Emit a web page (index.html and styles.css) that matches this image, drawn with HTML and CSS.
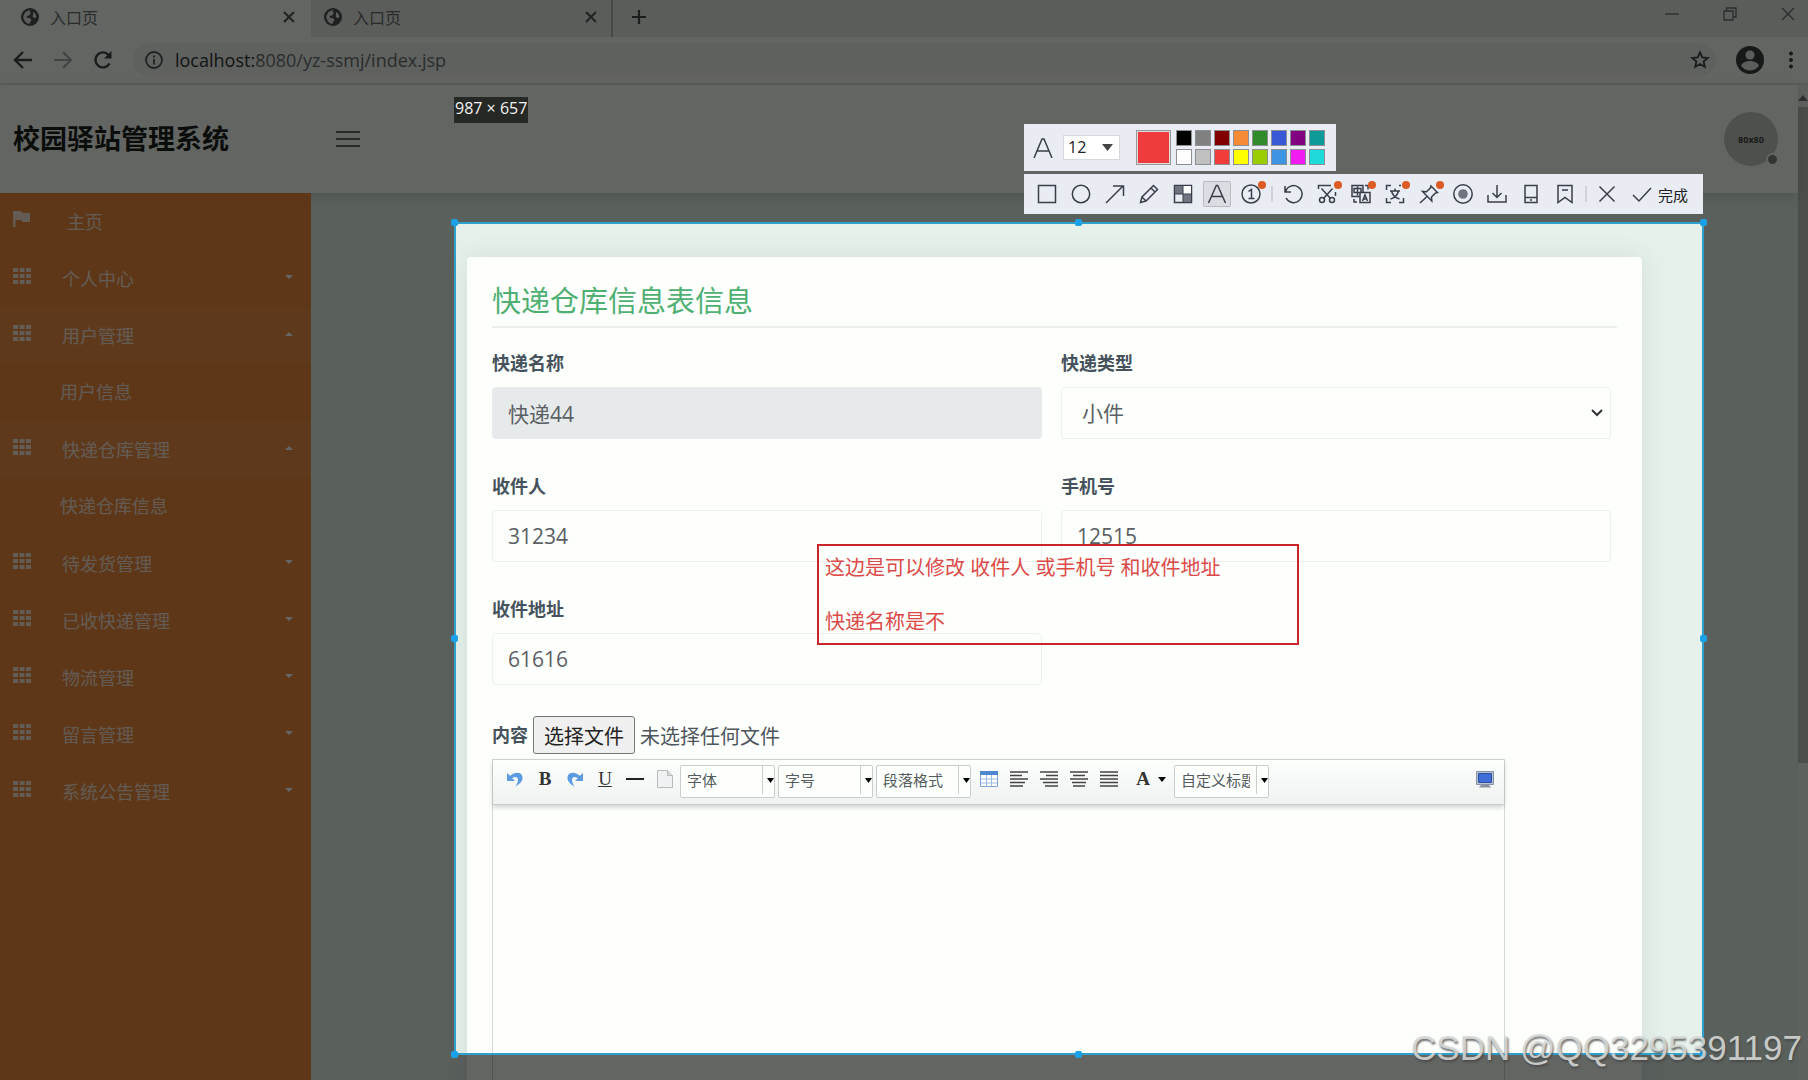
FILE: index.html
```html
<!DOCTYPE html>
<html lang="zh-CN">
<head>
<meta charset="utf-8">
<title>入口页</title>
<link rel="stylesheet" href="styles.css">
</head>
<body>
<svg class="defs" aria-hidden="true">
  <symbol id="globe" viewBox="0 0 18 18"><circle cx="9" cy="9" r="9" fill="#4b4e50"/><path d="M3 6.500c1.500-3 4-4.300 6.500-4.200l-1 1.800 1.500 1-2 2.400-2.500.6 1 2H9l1.500 2-1.500 2.500-.5 1.500C5 15.500 2.200 12 2.300 8.500zM12 4l2.500 1.800 1 3.500-2 1-1.800-1.500.3-2.300z" fill="#e4e6e4"/></symbol>
  <symbol id="grid" viewBox="0 0 18 16"><path d="M0 0h5v4H0zm6.500 0h5v4h-5zM13 0h5v4h-5zM0 6h5v4H0zm6.500 0h5v4h-5zM13 6h5v4h-5zM0 12h5v4H0zm6.500 0h5v4h-5zM13 12h5v4h-5z" fill="currentColor"/></symbol>
  <symbol id="cross" viewBox="0 0 12 12"><path d="M1 1l10 10M11 1L1 11" stroke="currentColor" stroke-width="2" fill="none"/></symbol>
</svg>

<header class="browser">
  <div class="tabs">
    <div class="tab tab-active"><svg class="globe"><use href="#globe"/></svg><span>入口页</span><button class="tab-close" aria-label="关闭"><svg><use href="#cross"/></svg></button></div>
    <div class="tab"><svg class="globe"><use href="#globe"/></svg><span>入口页</span><button class="tab-close" aria-label="关闭"><svg><use href="#cross"/></svg></button></div>
    <button class="new-tab" aria-label="新标签页"><svg width="16" height="16" viewBox="0 0 16 16"><path d="M8 1v14M1 8h14" stroke="#404244" stroke-width="2.200"/></svg></button>
    <div class="window-controls">
      <button aria-label="最小化"><svg width="14" height="14" viewBox="0 0 14 14"><path d="M0 7h14" stroke="#6a6d6f" stroke-width="1.300"/></svg></button>
      <button aria-label="还原"><svg width="14" height="14" viewBox="0 0 14 14" fill="none" stroke="#6a6d6f" stroke-width="1.300"><path d="M1 4h9v9H1zM3.500 4V1H13v9h-3"/></svg></button>
      <button aria-label="关闭窗口"><svg width="14" height="14" viewBox="0 0 14 14"><path d="M1 1l12 12M13 1L1 13" stroke="#6a6d6f" stroke-width="1.300"/></svg></button>
    </div>
  </div>
  <div class="toolbar">
    <button aria-label="后退"><svg width="20" height="20" viewBox="0 0 20 20" fill="none" stroke="#404345" stroke-width="2.400"><path d="M19 10H2.500M10 2l-8 8 8 8"/></svg></button>
    <button aria-label="前进"><svg width="20" height="20" viewBox="0 0 20 20" fill="none" stroke="#a8aaab" stroke-width="2.200"><path d="M1 10h16.500M10 2l8 8-8 8"/></svg></button>
    <button aria-label="刷新"><svg width="20" height="20" viewBox="0 0 20 20" fill="none" stroke="#404345" stroke-width="2.400"><path d="M16.500 13.500A7.500 7.500 0 1 1 15.600 5"/><path d="M18.500 1v7.500H11z" fill="#404345" stroke="none"/></svg></button>
    <div class="omnibox">
      <svg width="18" height="18" viewBox="0 0 18 18" fill="none" stroke="#505355" stroke-width="1.800"><circle cx="9" cy="9" r="8"/><path d="M9 8v5.500M9 4.500v2"/></svg>
      <span class="url"><b>localhost:</b>8080/yz-ssmj/index.jsp</span>
      <button class="star" aria-label="收藏"><svg width="20" height="20" viewBox="0 0 20 20" fill="none" stroke="#404345" stroke-width="1.800"><path d="M10 2.500l2.300 5 5.500.5-4.200 3.600 1.300 5.400-4.900-2.900L5.100 17l1.300-5.400L2.200 8l5.500-.5z"/></svg></button>
    </div>
    <button aria-label="用户"><svg width="28" height="28" viewBox="0 0 28 28"><circle cx="14" cy="14" r="14" fill="#383b3d"/><circle cx="14" cy="9" r="4.500" fill="#e8eae8"/><path d="M5 19.500c2-3.500 6-4.500 9-4.500s7 1 9 4.500c-2 3.500-5.500 5-9 5s-7-1.500-9-5z" fill="#e8eae8"/></svg></button>
    <button class="more" aria-label="菜单"><svg width="6" height="18" viewBox="0 0 6 18" fill="#383b3d"><circle cx="3" cy="2.500" r="2"/><circle cx="3" cy="9" r="2"/><circle cx="3" cy="15.500" r="2"/></svg></button>
  </div>
</header>

<div class="viewport">
  <div class="app">
    <header class="app-header">
      <h1>校园驿站管理系统</h1>
      <button class="burger" aria-label="切换菜单"><i></i><i></i><i></i></button>
      <div class="avatar"><span>80x80</span></div>
    </header>
    <div class="app-body">
      <nav class="sidebar">
        <a class="home" href="#"><svg class="nav-icon" viewBox="0 0 18 16"><path d="M0 0h8l1 2h8v9H9.500L8.500 9H2.500v7H0z" fill="currentColor"/></svg><span>主页</span></a>
        <a href="#"><svg class="nav-icon"><use href="#grid"/></svg><span>个人中心</span><i class="caret"></i></a>
        <a class="open" href="#"><svg class="nav-icon"><use href="#grid"/></svg><span>用户管理</span><i class="caret up"></i></a>
        <a class="sub" href="#">用户信息</a>
        <a class="open" href="#"><svg class="nav-icon"><use href="#grid"/></svg><span>快递仓库管理</span><i class="caret up"></i></a>
        <a class="sub" href="#">快递仓库信息</a>
        <a href="#"><svg class="nav-icon"><use href="#grid"/></svg><span>待发货管理</span><i class="caret"></i></a>
        <a href="#"><svg class="nav-icon"><use href="#grid"/></svg><span>已收快递管理</span><i class="caret"></i></a>
        <a href="#"><svg class="nav-icon"><use href="#grid"/></svg><span>物流管理</span><i class="caret"></i></a>
        <a href="#"><svg class="nav-icon"><use href="#grid"/></svg><span>留言管理</span><i class="caret"></i></a>
        <a href="#"><svg class="nav-icon"><use href="#grid"/></svg><span>系统公告管理</span><i class="caret"></i></a>
      </nav>
      <main class="content">
        <section class="card">
          <h2>快递仓库信息表信息</h2>
          <form class="form">
            <div class="field"><label for="name">快递名称</label><input id="name" value="快递44" readonly></div>
            <div class="field"><label for="type">快递类型</label><select id="type"><option>小件</option></select></div>
            <div class="field"><label for="receiver">收件人</label><input id="receiver" value="31234"></div>
            <div class="field"><label for="phone">手机号</label><input id="phone" value="12515"></div>
            <div class="field"><label for="address">收件地址</label><input id="address" value="61616"></div>
          </form>
          <div class="file-row"><label for="file">内容</label><button id="file" type="button">选择文件</button><span>未选择任何文件</span></div>
          <div class="editor">
            <div class="editor-bar">
              <button aria-label="撤销"><svg width="16" height="16" viewBox="0 0 16 16"><path d="M0 2v8h8L5.200 7.300C8 5 11 6 11 9c0 2-1 4-2.500 6.500C13 13 16 10 15.500 6 15 1 8 0 3.200 4.800z" fill="#5b9be0"/></svg></button>
              <button class="serif" aria-label="加粗">B</button>
              <button aria-label="重做"><svg width="16" height="16" viewBox="0 0 16 16"><path d="M16 2v8H8l2.800-2.700C8 5 5 6 5 9c0 2 1 4 2.500 6.500C3 13 0 10 .5 6 1 1 8 0 12.800 4.800z" fill="#5b9be0"/></svg></button>
              <button class="serif underline" aria-label="下划线">U</button>
              <button aria-label="分隔线"><svg width="18" height="16" viewBox="0 0 18 16"><path d="M0 8h18" stroke="#222" stroke-width="2"/></svg></button>
              <button aria-label="新建"><svg width="16" height="18" viewBox="0 0 16 18"><path d="M.5.500h10l5 5v12H.5z" fill="#f0f1f3" stroke="#b8babd"/><path d="M10.500.500v5h5" fill="#d8dadc" stroke="#b8babd"/></svg></button>
              <select aria-label="字体"><option>字体</option></select>
              <select aria-label="字号"><option>字号</option></select>
              <select aria-label="段落格式"><option>段落格式</option></select>
              <button aria-label="表格"><svg width="18" height="16" viewBox="0 0 18 16"><path d="M.5.500h17v15H.5z" fill="#fff" stroke="#7fa3d4"/><path d="M0 0h18v4H0z" fill="#4f86d0"/><path d="M1 8h16M1 12h16M6.500 4v11M11.500 4v11" stroke="#9bb9e2"/></svg></button>
              <button aria-label="左对齐"><svg width="18" height="16" viewBox="0 0 18 16"><path d="M0 1h18M0 4.500h12M0 8h18M0 11.500h15M0 15h13" stroke="#444" stroke-width="1.600"/></svg></button>
              <button aria-label="右对齐"><svg width="18" height="16" viewBox="0 0 18 16"><path d="M0 1h18M6 4.500h12M0 8h18M3 11.500h15M5 15h13" stroke="#444" stroke-width="1.600"/></svg></button>
              <button aria-label="居中"><svg width="18" height="16" viewBox="0 0 18 16"><path d="M0 1h18M3 4.500h12M0 8h18M2 11.500h14M3 15h12" stroke="#444" stroke-width="1.600"/></svg></button>
              <button aria-label="两端对齐"><svg width="18" height="16" viewBox="0 0 18 16"><path d="M0 1h18M0 4.500h18M0 8h18M0 11.500h18M0 15h18" stroke="#444" stroke-width="1.600"/></svg></button>
              <button class="serif color" aria-label="文字颜色">A<svg width="8" height="5" viewBox="0 0 8 5"><path d="M0 0h8L4 5z"/></svg></button>
              <select aria-label="自定义标题"><option>自定义标题</option></select>
              <button class="screen" aria-label="全屏"><svg width="18" height="17" viewBox="0 0 18 17"><path d="M.5.500h17v13H.5z" fill="#b9c3d2" stroke="#8592a8"/><path d="M2.500 2.500h13v9h-13z" fill="#3f6ed8" stroke="#2d4f9f"/><path d="M5 14h8l2 2.500H3z" fill="#8c929c"/></svg></button>
            </div>
            <textarea aria-label="正文"></textarea>
          </div>
        </section>
      </main>
    </div>
  </div>
  <div class="scrollbar"><i></i><b></b></div>
</div>

<div class="capture">
  <i class="handle nw"></i><i class="handle n"></i><i class="handle ne"></i><i class="handle w"></i><i class="handle e"></i><i class="handle sw"></i><i class="handle s"></i><i class="handle se"></i>
  <span class="size-tag">987 × 657</span>
  <textarea class="note" aria-label="批注" spellcheck="false">这边是可以修改 收件人 或手机号 和收件地址

快递名称是不</textarea>
  <div class="capture-tools">
    <div class="font-panel">
      <svg class="letter" width="20" height="20" viewBox="0 0 20 20"><path d="M1 20L9 1h2l8 19M4 13h12"/></svg>
      <select aria-label="字号"><option>12</option></select>
      <button class="swatch-current" aria-label="当前颜色"></button>
      <div class="swatches">
        <button class="black" aria-label="黑"></button><button class="gray" aria-label="灰"></button><button class="maroon" aria-label="深红"></button><button class="orange" aria-label="橙"></button><button class="green" aria-label="绿"></button><button class="blue" aria-label="蓝"></button><button class="purple" aria-label="紫"></button><button class="teal" aria-label="青"></button>
        <button class="white" aria-label="白"></button><button class="silver" aria-label="银"></button><button class="red" aria-label="红"></button><button class="yellow" aria-label="黄"></button><button class="lime" aria-label="黄绿"></button><button class="sky" aria-label="天蓝"></button><button class="magenta" aria-label="品红"></button><button class="cyan" aria-label="浅青"></button>
      </div>
    </div>
    <div class="draw-bar">
      <button aria-label="矩形"><svg viewBox="0 0 20 20"><path d="M1.500 1.500h17v17h-17z"/></svg></button>
      <button aria-label="椭圆"><svg viewBox="0 0 20 20"><circle cx="10" cy="10" r="8.700"/></svg></button>
      <button aria-label="箭头"><svg viewBox="0 0 20 20"><path d="M1 19L18 2M8 2h10.500v10"/></svg></button>
      <button aria-label="画笔"><svg viewBox="0 0 20 20"><path d="M1.500 18.500l1.500-5.500L14.500 1.500l4 4L7 17zM12 4l4 4M3 13l4 4"/></svg></button>
      <button aria-label="马赛克"><svg viewBox="0 0 20 20"><path d="M1.500 1.500h17v17h-17z"/><path d="M2 2h8v8H2zM10 10h8v8h-8z" fill="#707481" stroke="none"/><path d="M10 2h8v8h-8z" fill="#fff" stroke="none"/><path d="M2 10h16M10 2v16" stroke-width="1"/></svg></button>
      <button class="selected" aria-label="文字"><svg viewBox="0 0 20 20"><path d="M1.500 19L9.300 1.500h1.400L18.500 19M4.500 12.500h11"/></svg></button>
      <button class="new" aria-label="序号"><svg viewBox="0 0 20 20"><circle cx="10" cy="10" r="9"/><path d="M7.500 7.500L10.500 5.500v9M7.500 14.500h6"/></svg></button>
      <i class="divider"></i>
      <button aria-label="撤销"><svg viewBox="0 0 20 20"><path d="M2 2v6h6M2.500 7.500A8.500 8.500 0 1 1 3 14"/></svg></button>
      <button class="new" aria-label="裁剪"><svg viewBox="0 0 20 20"><path d="M1.500 5V1.500H14M18.500 8v4M4.500 4.500l9 10M15.500 4.500l-9 10"/><circle cx="5" cy="16" r="2.500"/><circle cx="15" cy="16" r="2.500"/></svg></button>
      <button class="new" aria-label="翻译"><svg viewBox="0 0 20 20"><path d="M9 12.500H1v-11h11V8M3 4.500h7v4H3zM6.500 2.500v9M9 8.500h10v10H9zM11.500 17l2.500-6 2.500 6M12.500 15h3M3 15v3h3M14 1.500h3v4"/></svg></button>
      <button class="new" aria-label="文字识别"><svg viewBox="0 0 20 20"><path d="M1.500 6V1.500H6M14 1.500h2M1.500 14v4.500H6M14 18.500h4.500V14M5 7h10M10 4.500V7M13.500 7c-1 4-4 7-8 8M6.500 7c1 4 4 7 8 8"/></svg></button>
      <button class="new" aria-label="钉住"><svg viewBox="0 0 20 20"><path d="M12 2l6.500 6.500-2 .5-4 4 .3 4L3.500 7.500l4 .3 4-4zM8 12.500L1 19"/></svg></button>
      <button aria-label="录制"><svg viewBox="0 0 20 20"><circle cx="10" cy="10" r="9.200"/><circle cx="10" cy="10" r="4.800" fill="#707481" stroke="none"/></svg></button>
      <button aria-label="保存"><svg viewBox="0 0 20 20"><path d="M10 1v12M5.500 9l4.500 4.500L14.500 9M1 11v7h18v-7"/></svg></button>
      <button aria-label="发送到手机"><svg viewBox="0 0 20 20"><path d="M4 1.500h12v17H4zM4 13.500h12M9 16h2"/></svg></button>
      <button aria-label="收藏"><svg viewBox="0 0 20 20"><path d="M3 1.500h14v17l-7-5-7 5zM7 6h6"/></svg></button>
      <i class="divider"></i>
      <button aria-label="取消"><svg viewBox="0 0 20 20"><path d="M2.500 2.500l15 15M17.500 2.500l-15 15"/></svg></button>
      <button class="done"><svg viewBox="0 0 20 20"><path d="M1 11l6 6L19 4"/></svg>完成</button>
    </div>
  </div>
</div>
<div class="watermark">CSDN @QQ3295391197</div>
</body>
</html>
```
FILE: styles.css
```css
* { box-sizing: border-box; }
html, body { height: 100%; }
body {
  margin: 0;
  position: relative;
  overflow: hidden;
  display: flex;
  flex-direction: column;
  background: #fdfffc;
  font-family: "Open Sans", "Noto Sans CJK SC", sans-serif;
  color: #4d565c;
}
button, input, select, textarea { font: inherit; color: inherit; margin: 0; }
button { border: 0; padding: 0; background: none; display: flex; align-items: center; justify-content: center; }
h1, h2 { margin: 0; }
a { color: inherit; text-decoration: none; }
i { font-style: normal; }
.defs { position: absolute; width: 0; height: 0; }

/* Browser window */
.browser { flex: none; border-bottom: 2px solid #e2e5e2; }
.tabs { display: flex; align-items: center; height: 37px; background: #e8ebe8; }
.tab { display: flex; align-items: center; width: 302px; height: 37px; padding: 0 14px 4px 13px; font-size: 16px; color: #6a6d6f; border-right: 2px solid #b4b7b4; }
.tab-active { width: 311px; padding: 0 16px 4px 21px; background: #fdfffc; border-right: 0; }
.globe { width: 18px; height: 18px; margin-right: 11px; }
.tab-close { margin-left: auto; color: #505355; }
.tab-close svg { width: 12px; height: 12px; }
.new-tab { margin-left: 18px; padding-bottom: 4px; }
.window-controls { display: flex; gap: 44px; margin-left: auto; padding: 0 13px 10px 0; }
.toolbar { display: flex; align-items: center; height: 46px; padding: 0 14px 0 13px; gap: 20px; background: #fdfffc; }
.omnibox { flex: 1; display: flex; align-items: center; height: 34px; padding: 0 6px 0 12px; border-radius: 17px; background: #f2f4f3; }
.url { margin-left: 12px; font-size: 18px; line-height: 24px; color: #6a6d6f; }
.url b { font-weight: 400; color: #2c2f31; }
.star { margin-left: auto; }
.more { margin-left: 4px; }

/* Page */
.viewport { flex: 1; min-height: 0; display: flex; }
.app { flex: 1; min-width: 0; display: flex; flex-direction: column; }
.app-header { flex: none; display: flex; align-items: center; height: 108px; padding: 0 20px 0 13px; background: #fdfffc; box-shadow: 0 3px 14px rgba(0, 0, 0, .12); z-index: 1; }
.app-header h1 { width: 323px; font-size: 27px; line-height: 36px; font-weight: 700; color: #1c1e1c; }
.burger { flex-direction: column; gap: 5px; }
.burger i { width: 24px; height: 2px; background: #6a6d6a; }
.avatar { position: relative; display: grid; place-items: center; width: 54px; height: 54px; margin-left: auto; border-radius: 50%; background: #c6c8c5; font-size: 9px; font-weight: 700; color: #3c3e3c; }
.avatar::after { content: ""; position: absolute; right: 1px; bottom: 2px; width: 9px; height: 9px; border-radius: 50%; background: #808380; box-shadow: 0 0 0 2px #fdfffc; }
.app-body { flex: 1; min-height: 0; display: flex; }
.scrollbar { width: 10px; display: flex; flex-direction: column; align-items: flex-end; background: #f4f6f3; }
.scrollbar i { width: 0; height: 0; margin: 10px 0 6px; border: 5px solid transparent; border-top: 0; border-bottom: 6px solid #777; }
.scrollbar b { width: 10px; height: 656px; background: #c0c3bf; }

.sidebar { flex: none; width: 311px; background: #f0893c; color: #fff; font-size: 18px; line-height: 57px; position: relative; z-index: 2; }
.sidebar a { display: flex; align-items: center; height: 57px; padding: 0 18px 0 13px; color: rgba(255, 255, 255, .8); }
.sidebar span { padding-top: 2px; }
.nav-icon { width: 18px; height: 16px; margin: 0 31px 6px 0; }
.home .nav-icon { margin-right: 36px; }
.sidebar .open { background: rgba(255, 255, 255, .06); }
.sidebar .sub { padding-left: 60px; }
.caret { margin: 0 0 4px auto; border: 4px solid transparent; border-bottom: 0; border-top-color: #fff; }
.caret.up { border-top: 0; border-bottom: 4px solid #fff; }

.content { flex: 1; min-width: 0; padding: 64px 156px 0; background: #e5f1ea; overflow: hidden; }
.card { height: 1200px; padding: 26px 25px; background: #fdfffd; border-radius: 4px; box-shadow: 0 0 28px rgba(60, 60, 90, .1); }
.card h2 { height: 45px; font-size: 29px; line-height: 36px; font-weight: 400; color: #4fb072; border-bottom: 2px solid #eceeec; }
.form { display: grid; grid-template-columns: 1fr 1fr; gap: 35px 19px; padding: 23px 6px 0 0; }
.field { display: flex; flex-direction: column; gap: 12px; min-width: 0; }
.field label, .file-row label { font-size: 18px; line-height: 24px; font-weight: 700; color: #46525c; }
.field input, .field select { width: 100%; height: 52px; padding: 0 15px; border: 1px solid #eef0f1; border-radius: 4px; background: #fdfffd; font-size: 21px; color: #5b6064; }
.field input[readonly] { background: #e7eaeb; border-color: #e7eaeb; }
.field select {
  appearance: none; padding-left: 20px;
  background: #fdfffd url("data:image/svg+xml,%3Csvg xmlns='http://www.w3.org/2000/svg' width='12' height='8'%3E%3Cpath d='M1 1l5 5 5-5' fill='none' stroke='%23333' stroke-width='2'/%3E%3C/svg%3E") no-repeat right 7px center;
}
.file-row { display: flex; align-items: center; height: 38px; margin-top: 31px; font-size: 20px; }
.file-row button { height: 38px; margin: 0 5px; padding: 0 10px; border: 1px solid #767876; border-radius: 3px; background: #eff0ef; color: #222; }
.editor { width: 1013px; max-width: 100%; margin-top: 5px; border: 1px solid #d6d8d6; }
.editor-bar { display: flex; align-items: flex-start; height: 45px; padding: 5px 2px 0 7px; background: linear-gradient(#fdfffd, #f0f2f1); border-bottom: 1px solid #ccc; box-shadow: 0 2px 5px rgba(0, 0, 0, .2); }
.editor-bar button { flex: none; width: 30px; height: 28px; color: #333; }
.editor-bar .serif { font: 700 19px/28px "Liberation Serif", serif; }
.editor-bar .underline { font-weight: 400; text-decoration: underline; }
.editor-bar .color { width: 50px; gap: 8px; padding-left: 4px; }
.editor-bar .screen { width: 34px; margin-left: auto; }
.editor-bar select {
  appearance: none; flex: none; width: 95px; height: 33px; margin-right: 3px; padding: 0 18px 4px 6px; border: 1px solid #ccc; border-radius: 2px; font-size: 15px; color: #555c60;
  background: #fdfffd url("data:image/svg+xml,%3Csvg xmlns='http://www.w3.org/2000/svg' width='12' height='28'%3E%3Cpath d='M.5 0v28' stroke='%23ccc'/%3E%3Cpath d='M5 12h7l-3.500 5z'/%3E%3C/svg%3E") no-repeat right top;
}
.editor textarea { display: block; width: 100%; height: 500px; border: 0; background: none; resize: none; }

/* Screen capture layer: the selection is clear, everything round it is dimmed */
.capture { position: absolute; z-index: 10; inset: 222px 104px 25px 454px; border: 2px solid #2f9fd0; box-shadow: 0 0 0 2000px rgba(2, 4, 2, .61); }
.handle { position: absolute; width: 7px; height: 7px; margin: -4px; border-radius: 2px; background: #1ba1e8; }
.nw, .n, .ne { top: -1px; }
.sw, .s, .se { bottom: -1px; }
.nw, .w, .sw { left: -1px; }
.ne, .e, .se { right: -1px; }
.n, .s { left: 50%; }
.w, .e { top: 50%; }
.size-tag { position: absolute; left: -2px; top: -127px; height: 26px; padding: 0 1px; background: #262825; color: #f2f2f2; font-size: 16px; line-height: 23px; white-space: nowrap; }
.note { position: absolute; left: 361px; top: 320px; width: 482px; height: 101px; padding: 8px 6px; border: 2px solid #c9252b; background: transparent; color: #dc4a48; font-size: 20px; line-height: 27px; resize: none; overflow: hidden; }
.capture-tools { position: absolute; right: -1px; bottom: 100%; width: 679px; margin-bottom: 10px; display: flex; flex-direction: column; align-items: flex-start; gap: 3px; }
.font-panel { display: flex; align-items: center; height: 47px; padding: 0 11px 0 9px; background: #e9edf3; }
.font-panel svg, .draw-bar svg { fill: none; stroke: #3b3e4a; stroke-width: 1.500; }
.font-panel select {
  appearance: none; width: 57px; height: 25px; margin: 0 16px 0 10px; padding: 0 4px 2px; border: 1px solid #d5d9de; font-size: 16px; line-height: 20px; color: #222;
  background: #fff url("data:image/svg+xml,%3Csvg xmlns='http://www.w3.org/2000/svg' width='11' height='7'%3E%3Cpath d='M0 0h11l-5.500 7z' fill='%23444'/%3E%3C/svg%3E") no-repeat right 6px center;
}
.swatch-current { width: 35px; height: 35px; margin-right: 5px; border: 1px solid #999; background: #ef3b3b; box-shadow: inset 0 0 0 1px #ddd; }
.swatches { display: grid; grid-template-columns: repeat(8, 16px); gap: 3px; }
.swatches button { height: 16px; border: 1px solid #8c8f94; }
.black { background: #000; } .gray { background: #808080; } .maroon { background: #800000; } .orange { background: #f58b34; }
.green { background: #2f8a2c; } .blue { background: #3858d6; } .purple { background: #800080; } .teal { background: #0e9a98; }
.white { background: #fff; } .silver { background: #c0c0c0; } .red { background: #f23b3b; } .yellow { background: #ff0; }
.lime { background: #9acc00; } .sky { background: #3c94e2; } .magenta { background: #f01cf0; } .cyan { background: #1edada; }
.draw-bar { display: flex; align-items: center; width: 100%; height: 40px; padding: 0 15px 0 9px; gap: 6px; background: #e9edf3; }
.draw-bar button { position: relative; flex: none; width: 28px; height: 26px; border-radius: 2px; }
.draw-bar svg { width: 20px; height: 20px; }
.draw-bar .selected { background: #dadde2; box-shadow: inset 0 0 0 1px #b9bcc2; }
.draw-bar .new::after { content: ""; position: absolute; right: -1px; top: 0; width: 8px; height: 8px; border-radius: 50%; background: #dc5a24; }
.divider { width: 2px; height: 16px; background: #cfd2d8; }
.draw-bar .done { width: auto; gap: 6px; margin-left: auto; font-size: 15px; color: #222; }

.watermark { position: absolute; z-index: 11; right: 6px; bottom: 12px; font: 35px/40px "Liberation Sans", sans-serif; color: rgba(215, 217, 215, .9); text-shadow: 1px 2px 2px rgba(70, 70, 70, .8); white-space: nowrap; }
```
